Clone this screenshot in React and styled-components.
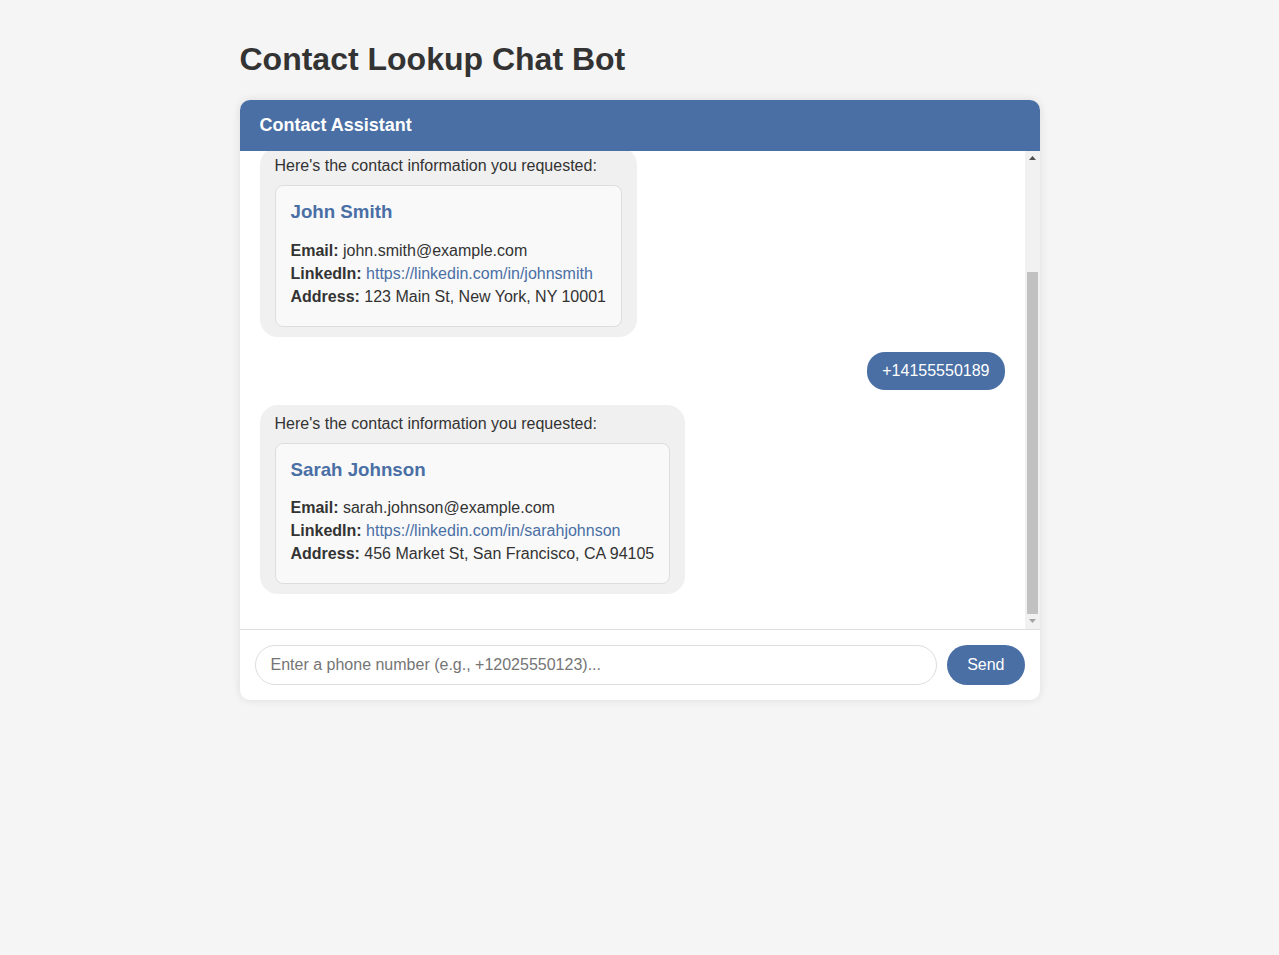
import React, { useLayoutEffect, useRef, useState } from "react";
import styled, { createGlobalStyle } from "styled-components";

const GlobalStyle = createGlobalStyle`
  html, body { margin: 0; padding: 0; }
  body {
    background: #f5f5f5;
    font-family: "Liberation Sans", Arial, sans-serif;
    color: #333;
    padding: 20px;
  }
  * { box-sizing: border-box; }
`;

const Page = styled.div`
  max-width: 800px;
  margin: 0 auto;
`;

const Title = styled.h1`
  font-size: 32px;
  font-weight: bold;
  color: #333;
  margin: 21.44px 0;
`;

const ChatWindow = styled.div`
  height: 600px;
  display: flex;
  flex-direction: column;
  background: #fff;
  border-radius: 10px;
  overflow: hidden;
  box-shadow: 0 0 10px rgba(0, 0, 0, 0.1);
`;

const Header = styled.div`
  background: #4a6fa5;
  color: #fff;
  padding: 15px 20px;
  font-size: 18px;
  font-weight: bold;
`;

const MessagesPane = styled.div`
  flex: 1;
  min-height: 0;
  display: flex;
`;

const Messages = styled.div`
  flex: 1;
  min-width: 0;
  overflow-y: auto;
  padding: 20px;
  display: flex;
  flex-direction: column;
  scrollbar-width: none;
  &::-webkit-scrollbar { display: none; }
`;

const ScrollBar = styled.div`
  width: 15px;
  flex-shrink: 0;
  display: flex;
  flex-direction: column;
  background: #f1f1f1;
`;

const ScrollButton = styled.div`
  height: 15px;
  flex-shrink: 0;
  display: flex;
  align-items: center;
  justify-content: center;
  color: ${(p) => (p.$disabled ? "#a3a3a3" : "#505050")};
`;

const ScrollTrack = styled.div`
  flex: 1;
  display: flex;
  flex-direction: column;
  padding: 0 2px;
`;

const ScrollThumb = styled.div`
  background: #c1c1c1;
  flex-shrink: 0;
`;

const Bubble = styled.div`
  align-self: ${(p) => (p.$user ? "flex-end" : "flex-start")};
  max-width: 80%;
  padding: 10px 15px;
  margin-bottom: 15px;
  border-radius: 18px;
  font-size: 16px;
  line-height: normal;
  background: ${(p) => (p.$user ? "#4a6fa5" : "#f0f0f0")};
  color: ${(p) => (p.$user ? "#fff" : "#333")};
`;

const Card = styled.div`
  margin-top: 10px;
  background: #f9f9f9;
  border: 1px solid #ddd;
  border-radius: 8px;
  padding: 15px;
`;

const CardName = styled.h3`
  margin: 0 0 18.72px;
  font-size: 18.72px;
  color: #4a6fa5;
`;

const Field = styled.p`
  margin: 5px 0;
`;

const Link = styled.a`
  color: #4a6fa5;
  text-decoration: none;
`;

const InputBar = styled.div`
  display: flex;
  gap: 10px;
  padding: 15px;
  border-top: 1px solid #ddd;
`;

const Input = styled.input`
  flex: 1;
  padding: 10px 15px;
  border: 1px solid #ddd;
  border-radius: 20px;
  font-family: "Liberation Sans", Arial, sans-serif;
  font-size: 16px;
  outline: none;
  color: #333;
  &::placeholder { color: #757575; }
`;

const SendButton = styled.button`
  padding: 10px 20px;
  background: #4a6fa5;
  color: #fff;
  border: none;
  border-radius: 20px;
  font-family: "Liberation Sans", Arial, sans-serif;
  font-size: 16px;
  cursor: pointer;
`;

const contacts = [
  {
    phone: "+12025550123",
    name: "John Smith",
    email: "john.smith@example.com",
    linkedin: "https://linkedin.com/in/johnsmith",
    address: "123 Main St, New York, NY 10001",
  },
  {
    phone: "+14155550189",
    name: "Sarah Johnson",
    email: "sarah.johnson@example.com",
    linkedin: "https://linkedin.com/in/sarahjohnson",
    address: "456 Market St, San Francisco, CA 94105",
  },
];

function ContactCard({ c }) {
  return (
    <Card>
      <CardName>{c.name}</CardName>
      <Field>
        <strong>Email:</strong> {c.email}
      </Field>
      <Field>
        <strong>LinkedIn:</strong> <Link href="#">{c.linkedin}</Link>
      </Field>
      <Field>
        <strong>Address:</strong> {c.address}
      </Field>
    </Card>
  );
}

function Arrow({ down }) {
  return (
    <svg width="7" height="4" viewBox="0 0 7 4">
      <path d={down ? "M0 0 L3.5 4 L7 0 Z" : "M0 4 L3.5 0 L7 4 Z"} fill="currentColor" />
    </svg>
  );
}

export default function App() {
  const ref = useRef(null);
  const trackRef = useRef(null);
  const [thumb, setThumb] = useState({ top: 0, height: 0 });

  useLayoutEffect(() => {
    const el = ref.current;
    const tr = trackRef.current;
    if (!el || !tr) return;
    el.scrollTop = el.scrollHeight;
    const trackH = tr.clientHeight;
    const ratio = el.clientHeight / el.scrollHeight;
    const h = Math.round(trackH * ratio);
    const maxScroll = el.scrollHeight - el.clientHeight;
    const top = maxScroll > 0 ? Math.round((trackH - h) * (el.scrollTop / maxScroll)) : 0;
    setThumb((t) => (t.top === top && t.height === h ? t : { top, height: h }));
  });

  return (
    <>
      <GlobalStyle />
      <Page>
        <Title>Contact Lookup Chat Bot</Title>
        <ChatWindow>
          <Header>Contact Assistant</Header>
          <MessagesPane>
            <Messages ref={ref}>
              <Bubble>
                Hello! I can help you find contact information. Please enter a phone number
                to look up the associated contact details.
              </Bubble>
              {contacts.map((c) => (
                <React.Fragment key={c.phone}>
                  <Bubble $user>{c.phone}</Bubble>
                  <Bubble>
                    Here's the contact information you requested:
                    <ContactCard c={c} />
                  </Bubble>
                </React.Fragment>
              ))}
            </Messages>
            <ScrollBar aria-hidden="true">
              <ScrollButton>
                <Arrow />
              </ScrollButton>
              <ScrollTrack ref={trackRef}>
                <ScrollThumb style={{ marginTop: thumb.top, height: thumb.height }} />
              </ScrollTrack>
              <ScrollButton $disabled>
                <Arrow down />
              </ScrollButton>
            </ScrollBar>
          </MessagesPane>
          <InputBar>
            <Input placeholder="Enter a phone number (e.g., +12025550123)..." />
            <SendButton>Send</SendButton>
          </InputBar>
        </ChatWindow>
      </Page>
    </>
  );
}
